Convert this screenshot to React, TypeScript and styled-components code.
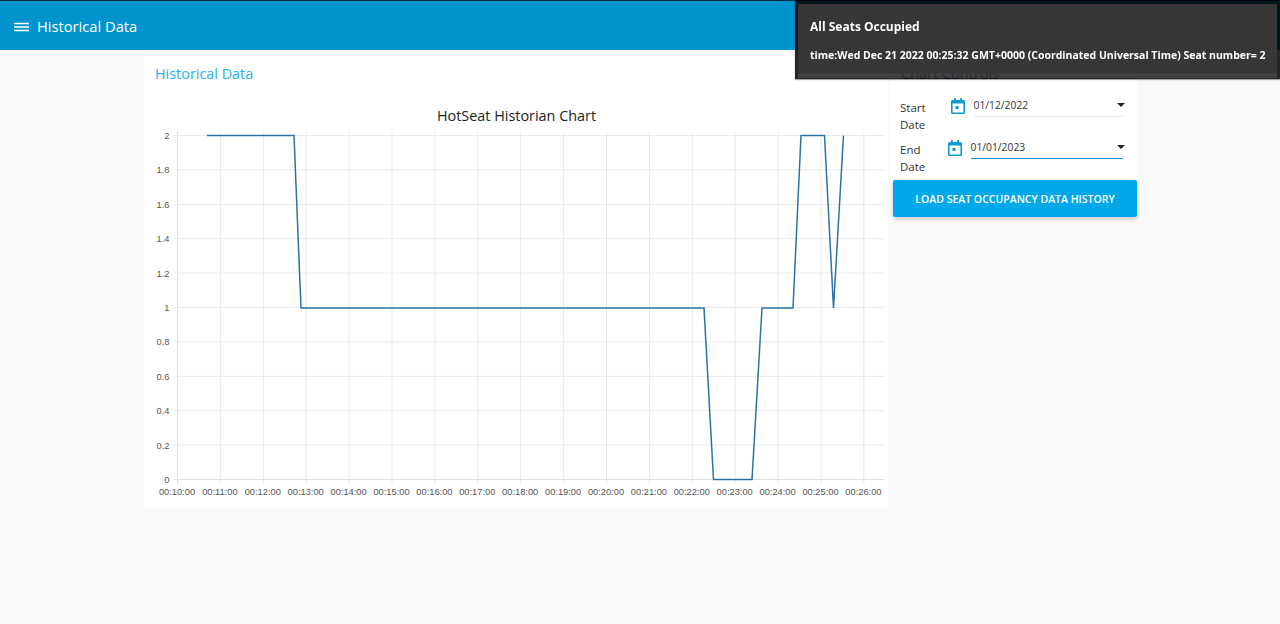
import React from 'react'
import styled, { createGlobalStyle } from 'styled-components'

const UI_FONT = '"Open Sans", "Noto Sans", sans-serif'
const CHART_FONT = '"Liberation Sans", Arial, sans-serif'

const GlobalStyle = createGlobalStyle`
  html, body {
    margin: 0;
    padding: 0;
    height: 100%;
    background: #fafafa;
    font-family: ${UI_FONT};
    overflow: hidden;
  }
`

const Page = styled.div`
  width: 1280px;
  height: 624px;
  display: flex;
  flex-direction: column;
`

const Toolbar = styled.header`
  height: 50px;
  flex: none;
  box-sizing: border-box;
  display: flex;
  align-items: center;
  gap: 8px;
  padding: 3px 14px 0 14px;
  background: #0094ce;
  border-top: 1px solid #0b2a4a;
  color: #ffffff;
`

const MenuIcon = styled.svg`
  width: 15px;
  height: 12px;
  flex: none;
`

const ToolbarTitle = styled.div`
  margin-top: -2px;
  font-size: 14.7px;
  line-height: 20px;
`

const Main = styled.main`
  display: flex;
  align-items: flex-start;
  gap: 3px;
  padding: 5px 0 0 144px;
`

const ChartCard = styled.section`
  width: 744px;
  height: 453px;
  flex: none;
  background: #ffffff;
  display: flex;
  flex-direction: column;
`

const CardTitle = styled.h2`
  margin: 0;
  padding: 10px 11px 0;
  height: 30px;
  box-sizing: border-box;
  font-size: 14.4px;
  line-height: 18px;
  font-weight: 500;
  color: #29b0ea;
`

const ChartSvg = styled.svg`
  display: block;
  width: 744px;
  height: 423px;
`

const ControlsCard = styled.section`
  width: 246px;
  height: 164px;
  flex: none;
  background: #ffffff;
  display: flex;
  flex-direction: column;
  padding: 0 0 0 2px;
  box-sizing: border-box;
`

const ControlsTitle = styled.h2`
  margin: 0;
  padding: 10px 8px 0;
  height: 36px;
  box-sizing: border-box;
  font-size: 14.5px;
  line-height: 18px;
  font-weight: 400;
  color: #0b3a66;
`

const DateRow = styled.div<{ $iconOffset: number }>`
  display: flex;
  height: 42px;
  align-items: flex-start;
  padding-left: 7px;

  > svg {
    margin: 7px 8.5px 0 ${p => p.$iconOffset}px;
    flex: none;
  }
`

const DateLabel = styled.label`
  width: 46px;
  flex: none;
  padding-top: 9px;
  font-size: 11.5px;
  line-height: 16.5px;
  color: #333333;
`

const DateField = styled.div<{ $focused?: boolean }>`
  flex: 1;
  height: 26px;
  margin: 0 14px 0 0;
  box-sizing: border-box;
  display: flex;
  align-items: flex-start;
  justify-content: space-between;
  padding-top: 8px;
  font-size: 10.3px;
  line-height: 13px;
  color: #333333;
  border-bottom: 1px solid ${p => (p.$focused ? '#0094ce' : '#dfe9ee')};
`

const Caret = styled.span`
  width: 0;
  height: 0;
  margin: 4px -2px 0 0;
  border-left: 4.5px solid transparent;
  border-right: 4.5px solid transparent;
  border-top: 4.5px solid #222222;
`

const LoadButton = styled.button`
  height: 37px;
  margin: 5px 0 0;
  padding: 0;
  border: 0;
  border-radius: 2px;
  background: #00a8ea;
  color: #ffffff;
  font-family: ${UI_FONT};
  font-size: 10.5px;
  font-weight: 600;
  box-shadow: 0 2px 4px rgba(0, 0, 0, 0.24);
`

const Toast = styled.aside`
  position: fixed;
  top: 0;
  right: 0;
  width: 485px;
  height: 79px;
  box-sizing: border-box;
  padding: 14px 12px 0;
  border: 3px solid rgba(0, 0, 0, 0.85);
  border-top-width: 4px;
  border-bottom-width: 1px;
  background: linear-gradient(#363636 69px, rgba(44, 44, 44, 0.9) 69px) padding-box;
  color: #ffffff;
  box-shadow: 0 1px 1px rgba(0, 0, 0, 0.35);
`

const ToastTitle = styled.div`
  font-size: 12px;
  line-height: 17px;
  font-weight: 700;
`

const ToastBody = styled.div`
  margin-top: 13px;
  font-size: 10.5px;
  line-height: 14px;
  font-weight: 700;
  white-space: nowrap;
`

const TOP = 85.5
const BOTTOM = 429.5
const LEFT = 33.5
const RIGHT = 740
const OX = 144
const OY = 50

const xTicks = Array.from({ length: 17 }, (_, i) => ({
  x: LEFT + i * 42.9,
  label: `00:${String(10 + i)}:00`,
}))
const yTicks = ['0', '0.2', '0.4', '0.6', '0.8', '1', '1.2', '1.4', '1.6', '1.8', '2'].map((label, i) => ({
  y: BOTTOM - (i * (BOTTOM - TOP)) / 10,
  label,
}))

const seats = [
  [207, 135.5], [294, 135.5], [301, 308], [704, 308], [713.5, 479.5], [752, 479.5],
  [762, 308], [793, 308], [801, 135.5], [824.5, 135.5], [833.5, 308], [843.5, 135.5],
]
const seatLine = seats.map(([x, y]) => `${x - OX},${y - OY}`).join(' ')

const HistoryChart = () => (
  <ChartSvg viewBox="0 35 744 423">
    <text x="372.5" y="70.500" textAnchor="middle" fontFamily={UI_FONT} fontSize="14.4" fontWeight="500" fill="#222">
      HotSeat Historian Chart
    </text>
    {xTicks.map(t => (
      <g key={t.label}>
        <line x1={t.x} x2={t.x} y1={TOP - 4} y2={BOTTOM + 4} stroke={t.x === LEFT ? '#dcdcdc' : '#e8e9ea'} />
        <text x={t.x - 0.5} y={BOTTOM + 15} textAnchor="middle" fontFamily={CHART_FONT} fontSize="9.3" fill="#555">
          {t.label}
        </text>
      </g>
    ))}
    {yTicks.map(t => (
      <g key={t.label}>
        <line x1={LEFT - 4} x2={RIGHT} y1={t.y} y2={t.y} stroke={t.label === '0' ? '#e0e0e0' : '#e8e9ea'} />
        <text x={LEFT - 8} y={t.y + 3.5} textAnchor="end" fontFamily={CHART_FONT} fontSize="9.3" fill="#555">
          {t.label}
        </text>
      </g>
    ))}
    <polyline points={seatLine} fill="none" stroke="#2a73a8" strokeWidth="1.5" />
  </ChartSvg>
)

const CalendarIcon = () => (
  <svg width="14" height="16" viewBox="0 0 14 16">
    <path
      fill="#0f9bd2"
      fillRule="evenodd"
      d="M3 0h1.800v2h4.400V0H11v2h1.500A1.500 1.500 0 0 1 14 3.500v11a1.500 1.500 0 0 1-1.500 1.500h-11A1.500 1.500 0 0 1 0 14.500v-11A1.500 1.500 0 0 1 1.500 2H3V0zM1.600 5.600v8.800h10.800V5.600H1.600zM4.500 8h3v3h-3V8z"
    />
  </svg>
)

const App = () => (
  <>
    <GlobalStyle />
    <Page>
      <Toolbar>
        <MenuIcon viewBox="0 0 15 12">
          <path fill="#fff" d="M0 1.700h15v1.500H0zM0 5.200h15v1.500H0zM0 8.700h15v1.500H0z" />
        </MenuIcon>
        <ToolbarTitle>Historical Data</ToolbarTitle>
      </Toolbar>
      <Main>
        <ChartCard>
          <CardTitle>Historical Data</CardTitle>
          <HistoryChart />
        </ChartCard>
        <ControlsCard>
          <ControlsTitle>Chart Controls</ControlsTitle>
          <DateRow $iconOffset={5}>
            <DateLabel>Start Date</DateLabel>
            <CalendarIcon />
            <DateField>
              01/12/2022
              <Caret />
            </DateField>
          </DateRow>
          <DateRow $iconOffset={2}>
            <DateLabel>End Date</DateLabel>
            <CalendarIcon />
            <DateField $focused>
              01/01/2023
              <Caret />
            </DateField>
          </DateRow>
          <LoadButton>LOAD SEAT OCCUPANCY DATA HISTORY</LoadButton>
        </ControlsCard>
      </Main>
      <Toast>
        <ToastTitle>All Seats Occupied</ToastTitle>
        <ToastBody>time:Wed Dec 21 2022 00:25:32 GMT+0000 (Coordinated Universal Time) Seat number= 2</ToastBody>
      </Toast>
    </Page>
  </>
)

export default App
